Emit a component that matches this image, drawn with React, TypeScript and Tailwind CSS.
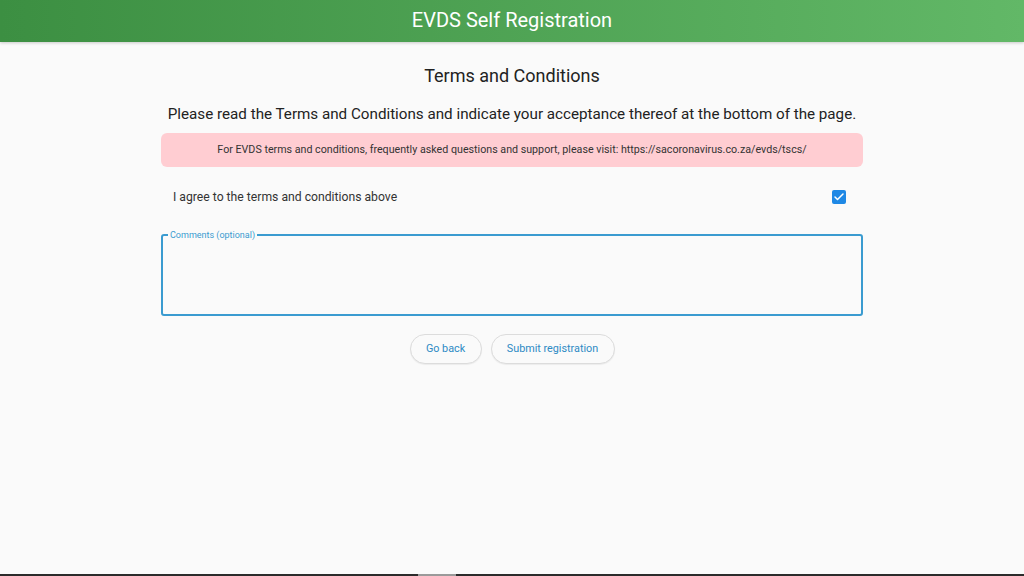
import { Check } from "lucide-react";

export default function App() {
  return (
    <div className="relative flex h-[576px] w-[1024px] flex-col overflow-hidden bg-[#fafafa] font-['Roboto',sans-serif] text-[#222]">
      <header className="flex h-[42px] shrink-0 items-center justify-center bg-gradient-to-r from-[#3c8f42] to-[#62b867] shadow-[0_1px_3px_rgba(0,0,0,0.2)]">
        <h1 className="-mt-[2px] text-[20px] font-normal text-white">EVDS Self Registration</h1>
      </header>

      <main className="mx-auto flex w-[702px] flex-col items-center">
        <h2 className="mt-[23px] text-[18px] leading-[22px] text-[#222]">Terms and Conditions</h2>
        <p className="mt-[17px] whitespace-nowrap text-[15.2px] leading-[20px] text-[#222]">
          Please read the Terms and Conditions and indicate your acceptance thereof at the bottom of the page.
        </p>

        <div className="mt-[9px] flex h-[34px] w-full items-center justify-center rounded-[6px] bg-[#ffcdd2] text-[10.7px] text-[#333]">
          For EVDS terms and conditions, frequently asked questions and support, please visit: https://sacoronavirus.co.za/evds/tscs/
        </div>

        <label className="mt-[14px] flex h-[32px] w-full items-center justify-between pl-[12px] pr-[17px]">
          <span className="text-[12.2px] text-[#333]">I agree to the terms and conditions above</span>
          <span className="flex h-[14px] w-[14px] items-center justify-center rounded-[2px] bg-[#1e88e5]">
            <Check className="h-[12px] w-[12px] text-white" strokeWidth={3} />
          </span>
        </label>

        <div className="relative mt-[21px] h-[82px] w-full rounded-[3px] border-2 border-[#3a9bd0]">
          <span className="absolute -top-[7px] left-[5px] bg-[#fafafa] px-[2px] text-[9px] leading-[12px] text-[#3a9bd0]">
            Comments (optional)
          </span>
          <textarea className="h-full w-full resize-none bg-transparent p-2 text-[13px] outline-none" />
        </div>

        <div className="mt-[18px] flex gap-[9px]">
          <button className="h-[30px] w-[72px] rounded-full border border-[#dcdcdc] bg-[#fafafa] text-[10.8px] text-[#2d8ac4] shadow-[0_1px_1px_rgba(0,0,0,0.06)]">
            Go back
          </button>
          <button className="h-[30px] w-[124px] rounded-full border border-[#dcdcdc] bg-[#fafafa] text-[10.8px] text-[#2d8ac4] shadow-[0_1px_1px_rgba(0,0,0,0.06)]">
            Submit registration
          </button>
        </div>
      </main>

      <div className="absolute bottom-0 left-0 flex h-[2px] w-full bg-[#2b2b2b]">
        <div className="ml-[418px] h-full w-[38px] bg-[#9a9a9a]" />
      </div>
    </div>
  );
}
